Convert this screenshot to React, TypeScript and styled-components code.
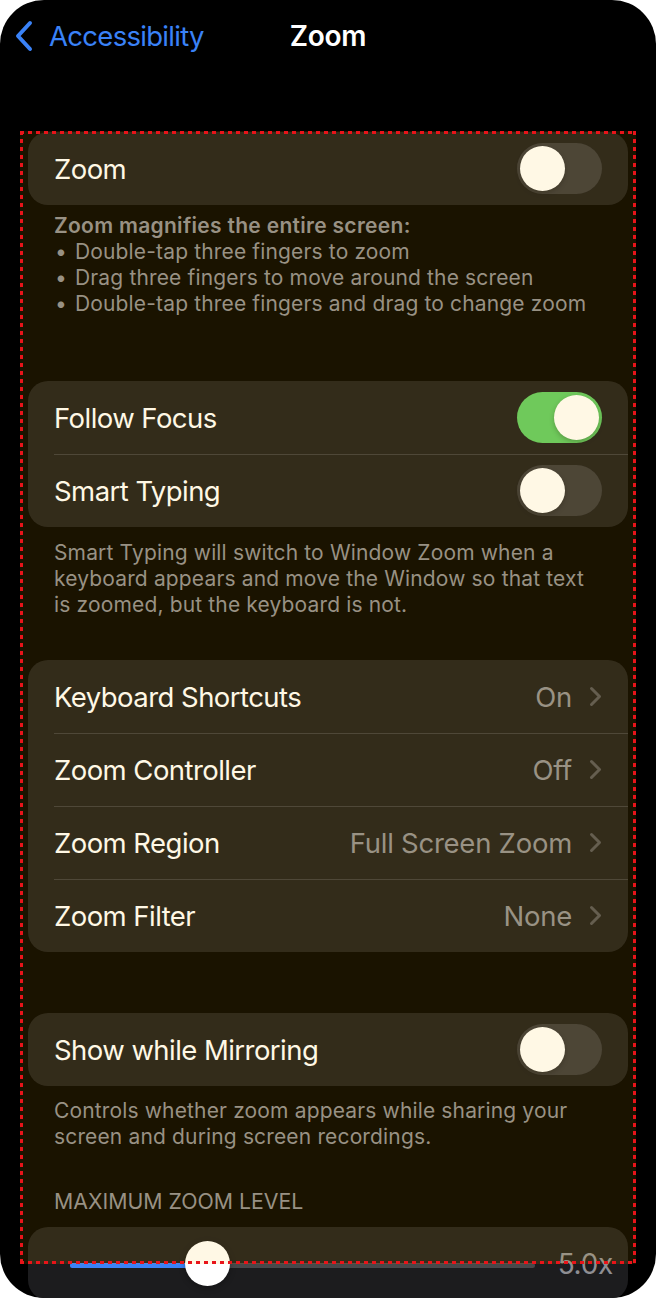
import React from "react";
import styled, { createGlobalStyle } from "styled-components";

const GlobalStyle = createGlobalStyle`
  html, body {
    margin: 0;
    padding: 0;
    background: #ffffff;
  }
  body {
    font-family: Inter, "Noto Sans", "Liberation Sans", sans-serif;
    -webkit-font-smoothing: antialiased;
  }
  * { box-sizing: border-box; }
`;

const Phone = styled.div`
  position: relative;
  width: 656px;
  height: 1298px;
  background: #000000;
  border-radius: 44px;
  overflow: hidden;
  color: #ffffff;
`;

const NavBar = styled.header`
  height: 72px;
  display: grid;
  grid-template-columns: 1fr auto 1fr;
  align-items: center;
`;

const BackButton = styled.div`
  display: flex;
  align-items: center;
  gap: 15px;
  padding-left: 14px;
  color: #3a82f7;
  font-size: 27.5px;
  letter-spacing: -0.7px;
`;

const Title = styled.h1`
  margin: 0;
  font-size: 28px;
  font-weight: 600;
  letter-spacing: -0.3px;
  color: #ffffff;
`;

const Content = styled.main`
  padding: 0 28px;
  margin-top: 60px;
  display: flex;
  flex-direction: column;
`;

const Group = styled.section<{ $mt?: number }>`
  background: #1c1c1e;
  border-radius: 20px;
  margin-top: ${(p) => p.$mt ?? 0}px;
  overflow: hidden;
`;

const Row = styled.div`
  height: 73px;
  display: flex;
  align-items: center;
  padding: 0 26px;
  & + & {
    background: linear-gradient(#3b3b3f, #3b3b3f) no-repeat 26px 0 / calc(100% - 26px) 1px;
  }
`;

const Label = styled.span`
  flex: 1;
  font-size: 27.5px;
  letter-spacing: -0.55px;
  color: #ffffff;
  white-space: nowrap;
`;

const Value = styled.span`
  font-size: 27.5px;
  letter-spacing: -0.25px;
  color: #8e8e93;
  white-space: nowrap;
`;

const Disclosure = styled.svg`
  margin-left: 17px;
  flex: none;
`;

const SwitchTrack = styled.div<{ $on: boolean }>`
  width: 85px;
  height: 51px;
  border-radius: 26px;
  padding: 3px;
  display: flex;
  justify-content: ${(p) => (p.$on ? "flex-end" : "flex-start")};
  background: ${(p) => (p.$on ? "#5fcb66" : "#39393d")};
  flex: none;
`;

const SwitchKnob = styled.div`
  width: 45px;
  height: 45px;
  border-radius: 50%;
  background: #ffffff;
  box-shadow: 0 2px 5px rgba(0, 0, 0, 0.25);
`;

const Footer = styled.div<{ $pt: number }>`
  padding: ${(p) => p.$pt}px 26px 0 26px;
  font-size: 21px;
  line-height: 26px;
  letter-spacing: 0.15px;
  color: #8d8d93;
`;

const FooterTitle = styled.div`
  font-weight: 600;
  letter-spacing: 0.3px;
`;

const BulletList = styled.ul`
  list-style: none;
  margin: 0;
  padding: 0;
`;

const BulletItem = styled.li`
  display: flex;
  &::before {
    content: "•";
    width: 20px;
    flex: none;
    padding-left: 1px;
  }
`;

const SectionHeader = styled.div<{ $mt: number }>`
  margin-top: ${(p) => p.$mt}px;
  padding: 0 26px;
  font-size: 21.3px;
  line-height: 26px;
  color: #8d8d93;
  text-transform: uppercase;
`;

const SliderRow = styled.div`
  height: 73px;
  display: flex;
  align-items: center;
  padding: 3px 15px 0 42px;
`;

const SliderTrack = styled.div`
  position: relative;
  flex: 1;
  height: 5px;
  border-radius: 3px;
  background: #48484a;
  margin-right: 23px;
`;

const SliderFill = styled.div`
  height: 100%;
  border-radius: 3px;
  background: #3a82f7;
`;

const SliderKnob = styled.div`
  position: absolute;
  top: 50%;
  width: 45px;
  height: 45px;
  margin: -24px 0 0 -22.5px;
  border-radius: 50%;
  background: #ffffff;
  box-shadow: 0 2px 6px rgba(0, 0, 0, 0.3);
`;

const SliderValue = styled.span`
  font-size: 28px;
  letter-spacing: -0.3px;
  color: #8e8e93;
  margin-top: -3px;
`;

const TintFrame = styled.div`
  position: absolute;
  left: 20px;
  top: 131px;
  width: 616px;
  height: 1133px;
  pointer-events: none;
  background:
    linear-gradient(90deg, #e8141a 50%, transparent 50%) left top / 8px 3px repeat-x,
    linear-gradient(90deg, #e8141a 50%, transparent 50%) left bottom / 8px 3px repeat-x,
    linear-gradient(180deg, #e8141a 50%, transparent 50%) left top / 3px 8px repeat-y,
    linear-gradient(180deg, #e8141a 50%, transparent 50%) right top / 3px 8px repeat-y,
    rgba(255, 190, 0, 0.1);
`;

const Switch = ({ on }: { on: boolean }) => (
  <SwitchTrack $on={on}>
    <SwitchKnob />
  </SwitchTrack>
);

const Chevron = () => (
  <Disclosure width="13" height="21" viewBox="0 0 13 21">
    <path d="M2.5 2.5 L10.5 10.5 L2.5 18.5" fill="none" stroke="#545459" strokeWidth="3" strokeLinecap="round" strokeLinejoin="round" />
  </Disclosure>
);

const ToggleRow = ({ label, on }: { label: string; on: boolean }) => (
  <Row>
    <Label>{label}</Label>
    <Switch on={on} />
  </Row>
);

const LinkRow = ({ label, value }: { label: string; value: string }) => (
  <Row>
    <Label>{label}</Label>
    <Value>{value}</Value>
    <Chevron />
  </Row>
);

const Slider = ({ value }: { value: number }) => (
  <SliderRow>
    <SliderTrack>
      <SliderFill style={{ width: `${value * 100}%` }} />
      <SliderKnob style={{ left: `${value * 100}%` }} />
    </SliderTrack>
    <SliderValue>5.0x</SliderValue>
  </SliderRow>
);

export default function App() {
  return (
    <>
      <GlobalStyle />
      <Phone>
        <NavBar>
          <BackButton>
            <svg width="20" height="34" viewBox="0 0 20 34">
              <path d="M16 4 L4 17 L16 30" fill="none" stroke="#3a82f7" strokeWidth="4" strokeLinecap="round" strokeLinejoin="round" />
            </svg>
            <span>Accessibility</span>
          </BackButton>
          <Title>Zoom</Title>
          <div />
        </NavBar>
        <Content>
          <Group>
            <ToggleRow label="Zoom" on={false} />
          </Group>
          <Footer $pt={8}>
            <FooterTitle>Zoom magnifies the entire screen:</FooterTitle>
            <BulletList>
              <BulletItem>Double-tap three fingers to zoom</BulletItem>
              <BulletItem>Drag three fingers to move around the screen</BulletItem>
              <BulletItem>Double-tap three fingers and drag to change zoom</BulletItem>
            </BulletList>
          </Footer>
          <Group $mt={64}>
            <ToggleRow label="Follow Focus" on={true} />
            <ToggleRow label="Smart Typing" on={false} />
          </Group>
          <Footer $pt={13}>
            Smart Typing will switch to Window Zoom when a keyboard appears and move the Window so that text is zoomed, but the keyboard is not.
          </Footer>
          <Group $mt={42}>
            <LinkRow label="Keyboard Shortcuts" value="On" />
            <LinkRow label="Zoom Controller" value="Off" />
            <LinkRow label="Zoom Region" value="Full Screen Zoom" />
            <LinkRow label="Zoom Filter" value="None" />
          </Group>
          <Group $mt={61}>
            <ToggleRow label="Show while Mirroring" on={false} />
          </Group>
          <Footer $pt={12}>
            Controls whether zoom appears while sharing your screen and during screen recordings.
          </Footer>
          <SectionHeader $mt={38}>Maximum Zoom Level</SectionHeader>
          <Group $mt={13}>
            <Slider value={0.297} />
          </Group>
        </Content>
        <TintFrame />
      </Phone>
    </>
  );
}
